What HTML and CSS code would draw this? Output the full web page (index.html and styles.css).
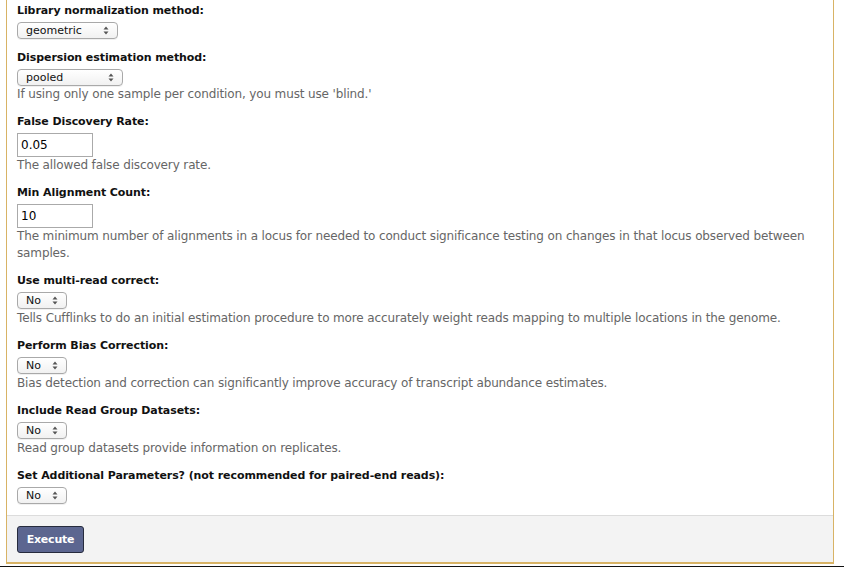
FILE: index.html
```html
<!DOCTYPE html>
<html>
<head>
<meta charset="utf-8">
<link rel="stylesheet" href="styles.css">
</head>
<body>
<div class="panel">
  <div class="form-body">
    <div class="row">
      <div class="label">Library normalization method:</div>
      <div class="select w100"><span>geometric</span><svg class="arr" width="6" height="9" viewBox="0 0 6 9"><path d="M0.5 3.5 L3 0.5 L5.5 3.5 Z M0.5 5.5 L3 8.5 L5.5 5.5 Z"/></svg></div>
    </div>
    <div class="row">
      <div class="label">Dispersion estimation method:</div>
      <div class="select w105"><span>pooled</span><svg class="arr" width="6" height="9" viewBox="0 0 6 9"><path d="M0.5 3.5 L3 0.5 L5.5 3.5 Z M0.5 5.5 L3 8.5 L5.5 5.5 Z"/></svg></div>
      <div class="help">If using only one sample per condition, you must use 'blind.'</div>
    </div>
    <div class="row">
      <div class="label">False Discovery Rate:</div>
      <div class="input">0.05</div>
      <div class="help">The allowed false discovery rate.</div>
    </div>
    <div class="row">
      <div class="label">Min Alignment Count:</div>
      <div class="input">10</div>
      <div class="help">The minimum number of alignments in a locus for needed to conduct significance testing on changes in that locus observed between samples.</div>
    </div>
    <div class="row">
      <div class="label">Use multi-read correct:</div>
      <div class="select w50"><span>No</span><svg class="arr" width="6" height="9" viewBox="0 0 6 9"><path d="M0.5 3.5 L3 0.5 L5.5 3.5 Z M0.5 5.5 L3 8.5 L5.5 5.5 Z"/></svg></div>
      <div class="help">Tells Cufflinks to do an initial estimation procedure to more accurately weight reads mapping to multiple locations in the genome.</div>
    </div>
    <div class="row">
      <div class="label">Perform Bias Correction:</div>
      <div class="select w50"><span>No</span><svg class="arr" width="6" height="9" viewBox="0 0 6 9"><path d="M0.5 3.5 L3 0.5 L5.5 3.5 Z M0.5 5.5 L3 8.5 L5.5 5.5 Z"/></svg></div>
      <div class="help">Bias detection and correction can significantly improve accuracy of transcript abundance estimates.</div>
    </div>
    <div class="row">
      <div class="label">Include Read Group Datasets:</div>
      <div class="select w50"><span>No</span><svg class="arr" width="6" height="9" viewBox="0 0 6 9"><path d="M0.5 3.5 L3 0.5 L5.5 3.5 Z M0.5 5.5 L3 8.5 L5.5 5.5 Z"/></svg></div>
      <div class="help">Read group datasets provide information on replicates.</div>
    </div>
    <div class="row">
      <div class="label">Set Additional Parameters? (not recommended for paired-end reads):</div>
      <div class="select w50"><span>No</span><svg class="arr" width="6" height="9" viewBox="0 0 6 9"><path d="M0.5 3.5 L3 0.5 L5.5 3.5 Z M0.5 5.5 L3 8.5 L5.5 5.5 Z"/></svg></div>
    </div>
  </div>
  <div class="footer">
    <button class="execute">Execute</button>
  </div>
</div>
<div class="bottom-line"></div>
</body>
</html>
```
FILE: styles.css
```css
html, body {
  margin: 0;
  padding: 0;
  background: #fff;
}
body {
  font-family: "DejaVu Sans", Verdana, sans-serif;
  font-size: 12px;
  letter-spacing: -0.13px;
  line-height: 17px;
  color: #222;
  overflow: hidden;
  height: 567px;
}
.panel {
  margin: -3px 0 0 6px;
  width: 828px;
  box-sizing: border-box;
  border-style: solid;
  border-color: #d8b365;
  border-width: 0 1px 2px 1px;
}
.form-body {
  padding: 0 0 5px 0;
}
.row {
  padding: 5px 10px;
}
.label {
  font-weight: bold;
  font-size: 11px;
  letter-spacing: -0.08px;
  color: #111;
  margin-bottom: 3px;
}
.select {
  display: flex;
  align-items: center;
  justify-content: space-between;
  box-sizing: border-box;
  height: 17px;
  border: 1px solid #a9a9a9;
  border-radius: 4px;
  background: linear-gradient(#ffffff, #f1f1f1);
  box-shadow: 0 1px 0 rgba(0,0,0,0.06);
  padding: 0 8px 0 8px;
  font-size: 11px;
  letter-spacing: 0;
  color: #111;
}
.select span {
  line-height: 15px;
}
.w100 { width: 101px; }
.w105 { width: 106px; }
.w50 { width: 50px; margin-bottom: 1px; }
.arr {
  fill: #555;
  flex: none;
}
.input {
  box-sizing: border-box;
  width: 76px;
  height: 24px;
  border: 1px solid #aaa;
  padding: 0 3px;
  line-height: 22px;
  font-size: 12px;
  letter-spacing: 0;
  color: #000;
  background: #fff;
}
.help {
  color: #666;
}
.footer {
  border-top: 1px solid #dcdcdc;
  background: #f3f3f3;
  padding: 10px 10px 9px 10px;
}
.execute {
  display: block;
  box-sizing: border-box;
  width: 67px;
  height: 27px;
  background: #5c6690;
  border: 1px solid #262b3d;
  border-radius: 3px;
  color: #fff;
  font-family: "DejaVu Sans", Verdana, sans-serif;
  font-weight: bold;
  font-size: 11px;
  letter-spacing: -0.2px;
  padding: 0;
}
.bottom-line {
  margin-top: 2px;
  height: 3px;
  background: #111;
}
```
